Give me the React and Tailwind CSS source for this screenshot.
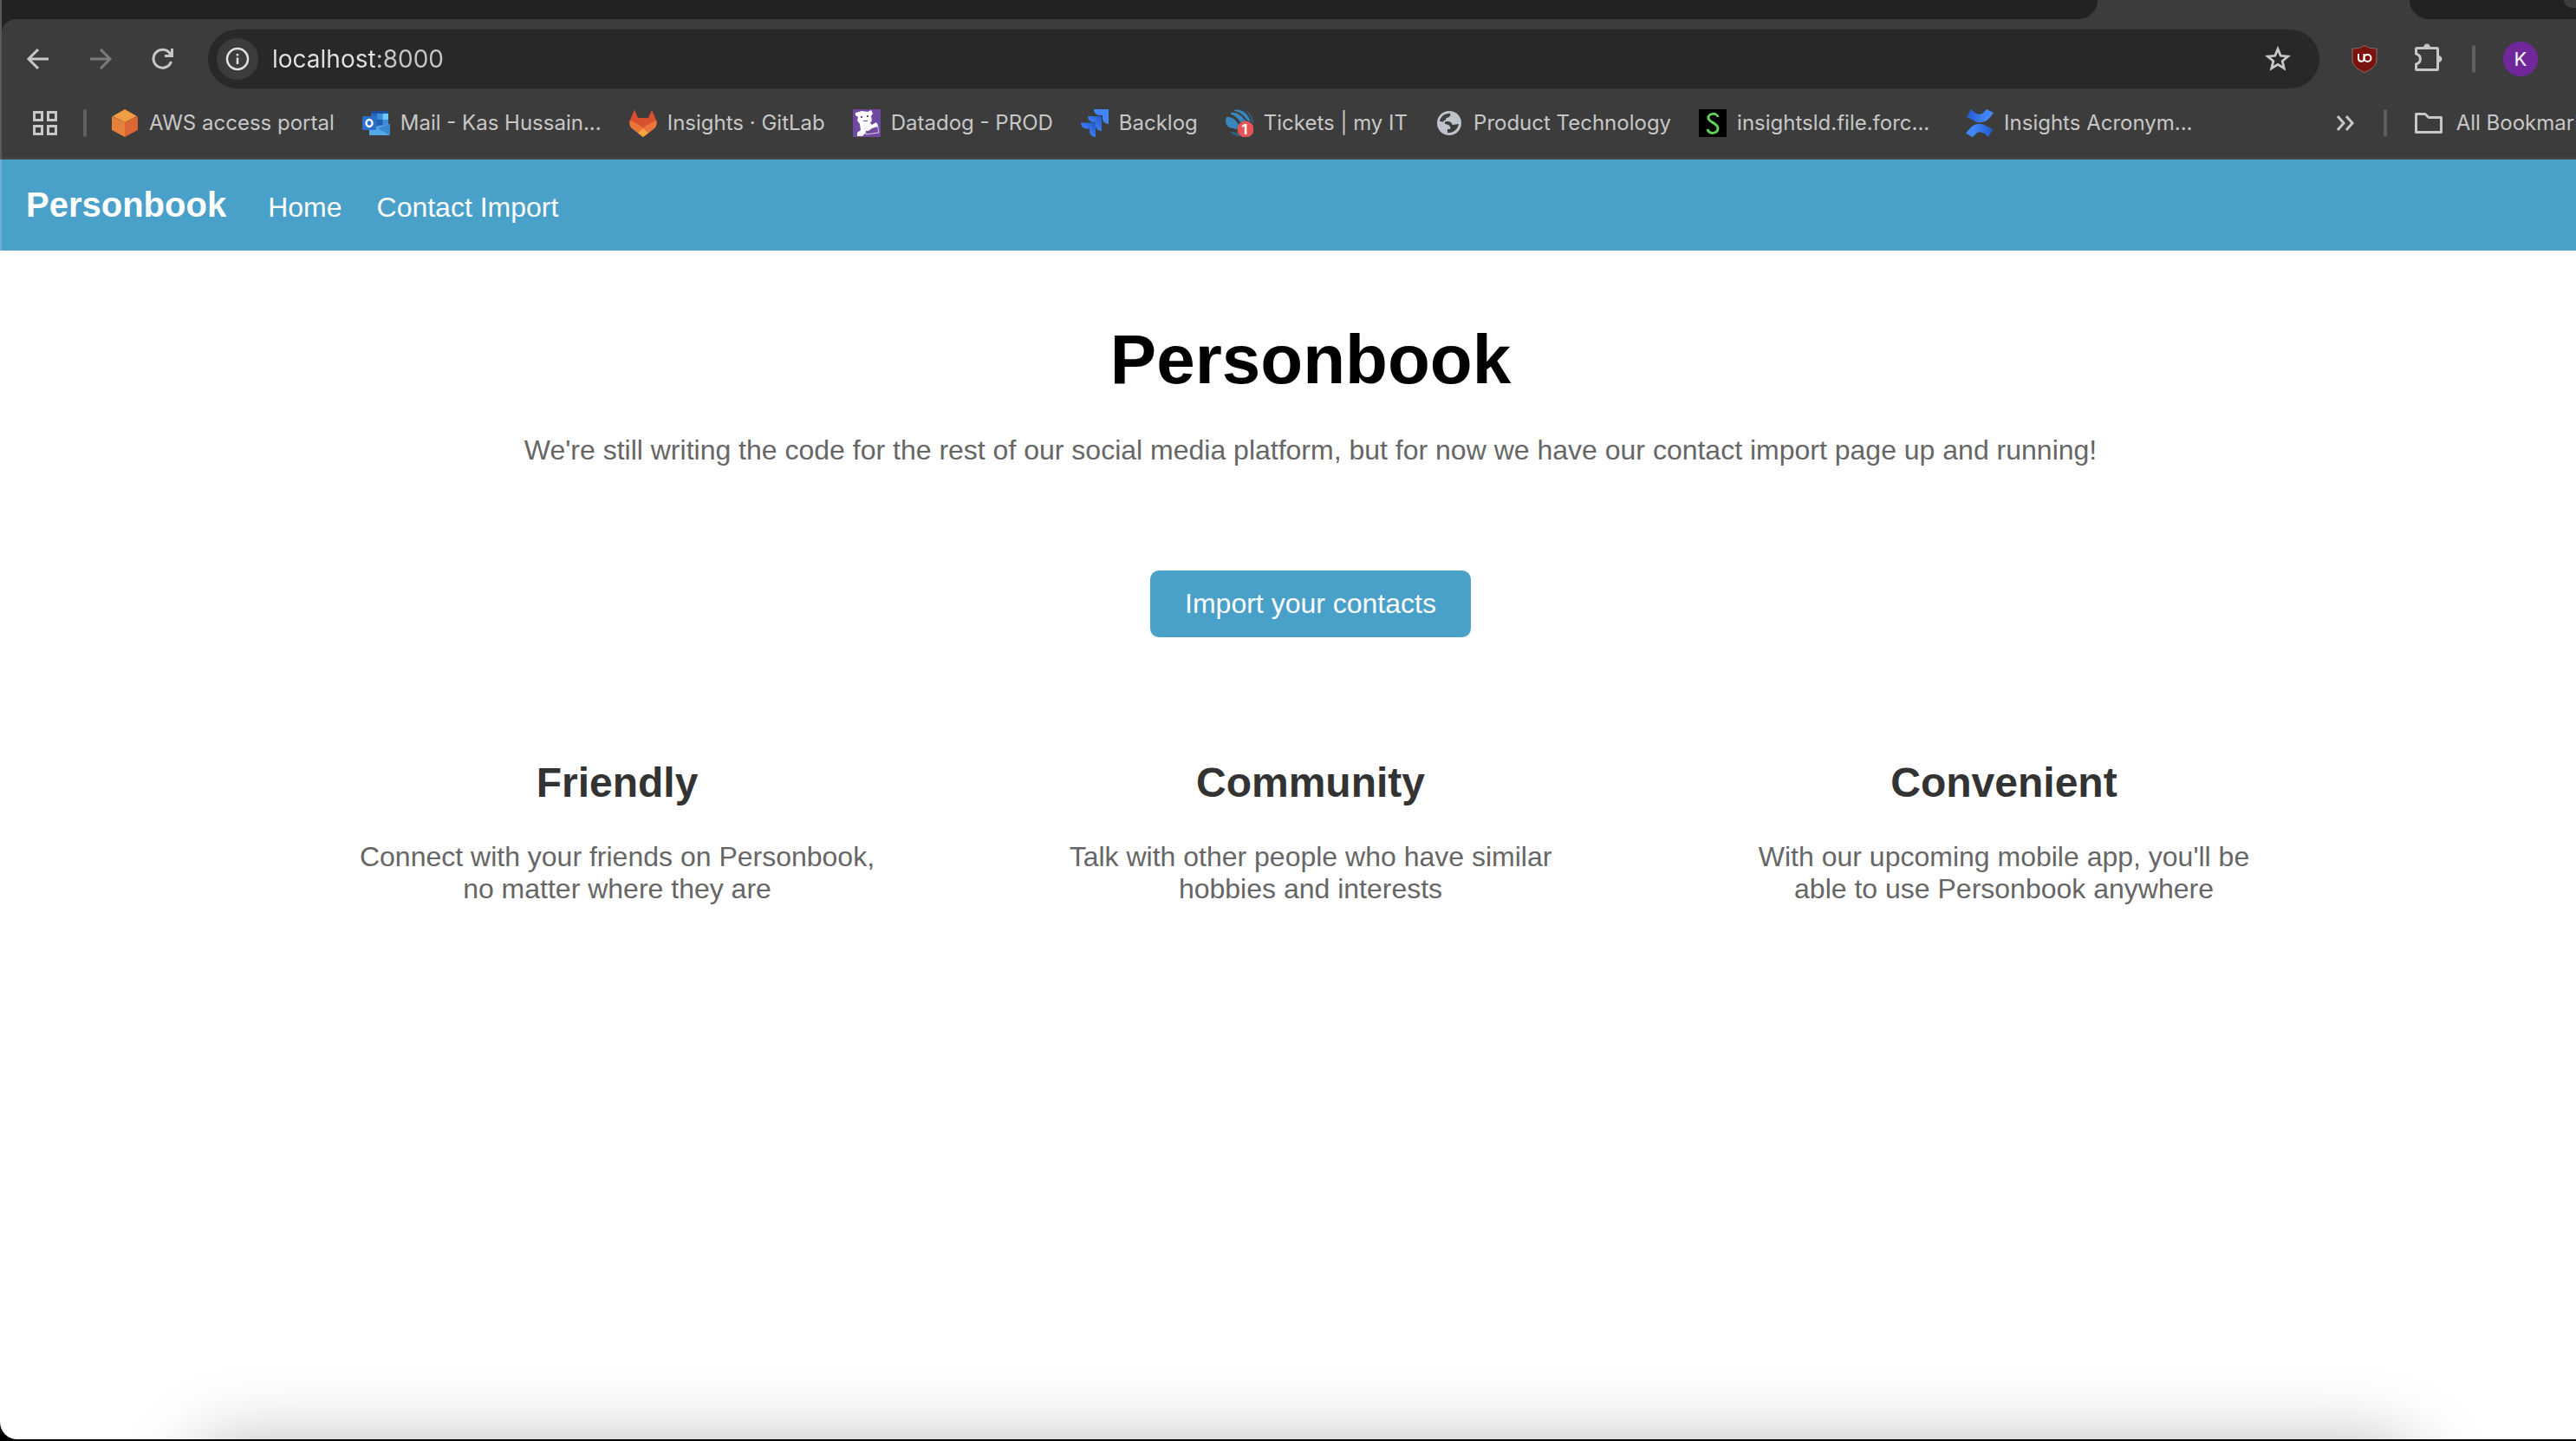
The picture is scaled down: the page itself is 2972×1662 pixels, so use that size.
import React from "react";

const AppsIcon = () => (
  <svg className="h-8 w-8" viewBox="0 0 32 32" fill="none" stroke="#c7c7c7" strokeWidth="3">
    <rect x="3.5" y="3.5" width="9" height="9" />
    <rect x="19.5" y="3.5" width="9" height="9" />
    <rect x="3.5" y="19.5" width="9" height="9" />
    <rect x="19.5" y="19.5" width="9" height="9" />
  </svg>
);

const AwsIcon = () => (
  <svg className="h-8 w-8 shrink-0" viewBox="0 0 32 32">
    <path d="M16 0 30 8 16 15 2 8Z" fill="#ef9c42" />
    <path d="M1 8 16 15V32L1 24Z" fill="#e5813a" />
    <path d="M31 8 16 15V32L31 24Z" fill="#dc6533" />
  </svg>
);

const OutlookIcon = () => (
  <svg className="h-8 w-8 shrink-0" viewBox="0 0 32 32">
    <path d="M10 2h20v18H10z" fill="#2a66b8" />
    <path d="M10 2h20v3H10z" fill="#1d4f98" />
    <path d="M17 5h6.500v7H17z" fill="#3a8edc" />
    <path d="M23.500 5H30v7h-6.500z" fill="#6fc9f8" />
    <path d="M17 12h6.500v6H17z" fill="#215fae" />
    <path d="M23.500 12H30v6h-6.500z" fill="#3a8edc" />
    <path d="M8 22l12-3 12-2v11a2 2 0 0 1-2 2H8z" fill="#53a8e6" />
    <path d="M18 22 32 30V17z" fill="#3c86cf" />
    <rect x="0" y="8" width="16" height="16" rx="1" fill="#2a6fc9" />
    <ellipse cx="8" cy="16" rx="3.500" ry="4" fill="none" stroke="#fff" strokeWidth="2.400" />
  </svg>
);

const GitlabIcon = () => (
  <svg className="h-8 w-8 shrink-0" viewBox="0 0 32 32">
    <path d="M6 0.500 10 10H22L26 0.500 31.500 14 16 24 0.500 14Z" fill="#d8502f" />
    <path d="M0.500 13C-0.500 17 1 21 4 23L16 32 28 23C31 21 32.500 17 31.500 13 27 14 22 17 16 21.500 10 17 5 14 0.500 13Z" fill="#ea743a" />
    <path d="M16 22 22 27.500 16 32 10 27.500Z" fill="#f0a53e" />
  </svg>
);

const DatadogIcon = () => (
  <svg className="h-8 w-8 shrink-0" viewBox="0 0 32 32">
    <rect width="32" height="32" fill="#704aa0" />
    <path d="M3 4 7 3 10 2 17 3 21 1 23 5 21 8 22 13 20 16 22 18 27 15 28 21 16 26 11 31 5 31 5 27 9 24 8 17 5 13 6 9 3 7Z" fill="#fff" />
    <path d="M14 21 28 17 30 27 15 29Z" fill="#704aa0" stroke="#d9cde8" strokeWidth="1" />
    <path d="M14 21 28 16 28.500 20 22 22 18 25 14.500 25Z" fill="#fff" />
    <path d="M9 8h2v2H9zM16 7h2v2h-2zM12 13h5v1h-5z" fill="#704aa0" />
  </svg>
);

const JiraIcon = () => (
  <svg className="h-8 w-8 shrink-0" viewBox="0 0 32 32">
    <defs>
      <linearGradient id="jiraShade" x1="1" y1="0" x2="0.300" y2="0.700">
        <stop offset="0" stopColor="#1f56c8" />
        <stop offset="1" stopColor="#4285f7" />
      </linearGradient>
    </defs>
    <path d="M15 0H32V17C28 17 25 14 25 10V7H22C18 7 15 4 15 0Z" fill="#4285f7" />
    <path d="M8 8H24V25C20 25 17 22 17 18V15H15C11 15 8 12 8 8Z" fill="url(#jiraShade)" />
    <path d="M0 15.500H17V32C13 32 10 29 10 25V22.500H7C3 22.500 0 19.500 0 15.500Z" fill="url(#jiraShade)" />
  </svg>
);

const TicketsIcon = () => (
  <svg className="h-8 w-8 shrink-0" viewBox="0 0 32 32">
    <path d="M1 9C6 8 12 12 15 18L13 23 4 21C0 18-1 13 1 9Z" fill="#3a86bb" />
    <path d="M6 4C13 3 20 8 24 15H17C15 11 11 7 6 6Z" fill="#3a86bb" />
    <path d="M10 1C18-1 25 4 29 14L25 13C21 7 17 3 10 2Z" fill="#3a86bb" />
    <path d="M22 1C28 3 32 9 32 17L30 14C29 8 26 4 22 1Z" fill="#33607f" />
    <path d="M5 26C9 30 14 32 19 31L15 27Z" fill="#33607f" />
    <circle cx="23" cy="23" r="9.500" fill="#e65555" />
    <text x="22" y="29" fill="#fff" fontSize="16" fontWeight="700" textAnchor="middle">1</text>
  </svg>
);

const GlobeIcon = () => (
  <svg className="h-8 w-8 shrink-0" viewBox="0 0 32 32">
    <circle cx="16" cy="16" r="14" fill="#bfc3ca" />
    <path d="M5 14C6 8.500 10.500 5 17 4.800C18 8 16 9.500 12.500 10C12.500 12 11.500 13 9.500 13V14.500Z" fill="#3c3c3c" />
    <path d="M11 14.500C14 13.500 19 14 19 17.500C21 18 23 17.500 27 17C26 23 21 27.500 14 27.200V23H17C18 20 16 17.500 11 17Z" fill="#3c3c3c" />
  </svg>
);

const SalesIcon = () => (
  <svg className="h-8 w-8 shrink-0" viewBox="0 0 32 32">
    <rect width="32" height="32" fill="#000" />
    <path d="M22 9C21 4 11 4 11 10C11 15 22 16 22 22C22 29 11 29 10 23" fill="none" stroke="#5fd35a" strokeWidth="3" />
  </svg>
);

const ConfluenceIcon = () => (
  <svg className="h-8 w-8 shrink-0" viewBox="0 0 32 32">
    <defs>
      <linearGradient id="confTop" x1="0" x2="1">
        <stop offset="0" stopColor="#2259cf" />
        <stop offset="0.700" stopColor="#4285f7" />
      </linearGradient>
      <linearGradient id="confBottom" x1="0" x2="1">
        <stop offset="0.300" stopColor="#4285f7" />
        <stop offset="1" stopColor="#2259cf" />
      </linearGradient>
    </defs>
    <path d="M6 0C11 5 14 7 19 5L24 0 32 4C25 15 17 18 9 13L1 9Z" fill="url(#confTop)" />
    <path d="M26 32C21 27 18 25 13 27L8 32 0 28C7 17 15 14 23 19L31 23Z" fill="url(#confBottom)" />
  </svg>
);

const bookmarks = [
  { label: "AWS access portal", Icon: AwsIcon },
  { label: "Mail - Kas Hussain...", Icon: OutlookIcon, capped: true },
  { label: "Insights · GitLab", Icon: GitlabIcon },
  { label: "Datadog - PROD", Icon: DatadogIcon },
  { label: "Backlog", Icon: JiraIcon },
  { label: "Tickets | my IT", Icon: TicketsIcon },
  { label: "Product Technology", Icon: GlobeIcon },
  { label: "insightsld.file.forc...", Icon: SalesIcon, capped: true },
  { label: "Insights Acronym...", Icon: ConfluenceIcon, capped: true },
];

const features = [
  { title: "Friendly", text: "Connect with your friends on Personbook, no matter where they are" },
  { title: "Community", text: "Talk with other people who have similar hobbies and interests" },
  { title: "Convenient", text: "With our upcoming mobile app, you'll be able to use Personbook anywhere" },
];

function TabStrip() {
  return (
    <div className="flex h-[22px] bg-[#3c3c3c]">
      <div className="flex-1 rounded-br-[22px] bg-[#202322]" />
      <div className="w-[360px]" />
      <div className="flex w-48 justify-end rounded-bl-[22px] bg-[#202322]">
        <div className="h-[9px] w-[14px] rounded-bl-xl bg-[#3c3c3c]" />
      </div>
    </div>
  );
}

function Toolbar() {
  return (
    <div className="flex h-[92px] items-center pl-6">
      <button aria-label="Back" className="flex h-9 w-9 items-center justify-center">
        <svg className="h-8 w-8" viewBox="0 0 32 32" fill="none" stroke="#c7c7c7" strokeWidth="3">
          <path d="M28 16H6M16 5 5 16 16 27" />
        </svg>
      </button>
      <button aria-label="Forward" disabled className="ml-9 flex h-9 w-9 items-center justify-center">
        <svg className="h-8 w-8" viewBox="0 0 32 32" fill="none" stroke="#7b7b7b" strokeWidth="3">
          <path d="M4 16H26M16 5 27 16 16 27" />
        </svg>
      </button>
      <button aria-label="Reload" className="ml-9 flex h-9 w-9 items-center justify-center">
        <svg className="h-8 w-8" viewBox="0 0 32 32" fill="none" stroke="#c7c7c7" strokeWidth="3">
          <path d="M25.500 19A10.500 10.500 0 1 1 24 9.500L26.500 12M26.500 4V12.500H18" />
        </svg>
      </button>
      <div className="ml-[34px] flex h-[68px] flex-1 items-center rounded-full bg-[#282828] pr-8 pl-[10px]">
        <button aria-label="Site information" className="flex h-12 w-12 items-center justify-center rounded-full bg-[#3c3c3c]">
          <svg className="h-8 w-8" viewBox="0 0 32 32" fill="none" stroke="#e3e3e3" strokeWidth="2.500">
            <circle cx="16" cy="16" r="12" />
            <path d="M16 14.500V22M16 10V12.500" />
          </svg>
        </button>
        <input
          type="text"
          aria-label="Address and search bar"
          defaultValue="localhost:8000"
          className="ml-4 min-w-0 flex-1 bg-[linear-gradient(to_right,#e3e3e3_121px,#c7c7c7_121px)] bg-clip-text text-[28px] text-transparent outline-none"
        />
        <button aria-label="Bookmark this tab">
          <svg className="h-8 w-8" viewBox="0 0 32 32" fill="none" stroke="#c7c7c7" strokeWidth="2.800">
            <path d="M16 4.500 19.200 12.300 27.600 13 21.200 18.500 23.200 26.700 16 22.300 8.800 26.700 10.800 18.500 4.400 13 12.800 12.300Z" />
          </svg>
        </button>
      </div>
      <button aria-label="uBlock Origin" className="ml-9">
        <svg className="h-8 w-8" viewBox="0 0 32 32">
          <path d="M16 0.500C20 3.500 25 4 30 4V16C30 24 24 28 16 31.500 8 28 2 24 2 16V4C7 4 12 3.500 16 0.500Z" fill="#7a120d" stroke="#8f6a68" />
          <path d="M9 10V16A3.500 3.500 0 0 0 15.500 17V10" fill="none" stroke="#fff" strokeWidth="2" />
          <circle cx="19.500" cy="15" r="4" fill="none" stroke="#fff" strokeWidth="2" />
        </svg>
      </button>
      <button aria-label="Extensions" className="ml-10">
        <svg className="h-9 w-9" viewBox="0 0 36 36">
          <path d="M3.500 12V6.500A1 1 0 0 1 4.500 5.500H27.500A1 1 0 0 1 28.500 6.500V29.500A1 1 0 0 1 27.500 30.500H4.500A1 1 0 0 1 3.500 29.500V24C10 22 10 14 3.500 12Z" fill="none" stroke="#c7c7c7" strokeWidth="3" strokeLinejoin="round" />
          <path d="M12 5A4 4.500 0 0 1 20 5ZM29 14A4.500 4 0 0 1 29 22Z" fill="#c7c7c7" />
        </svg>
      </button>
      <div className="mx-8 h-8 w-1 rounded-full bg-[#5f5f5f]" />
      <button aria-label="Profile" className="mr-11 flex h-10 w-10 items-center justify-center rounded-full bg-[#71279c] text-[22px] text-white">
        K
      </button>
    </div>
  );
}

function BookmarkBar() {
  return (
    <div className="flex h-[70px] items-center overflow-hidden border-b-2 border-[#474747] pb-3 pl-[34px] text-2xl whitespace-nowrap text-[#c7c7c7]">
      <button aria-label="Apps"><AppsIcon /></button>
      <div className="mx-7 h-8 w-1 shrink-0 rounded-full bg-[#5f5f5f]" />
      <nav aria-label="Bookmarks" className="flex flex-1 gap-8">
        {bookmarks.map(({ label, Icon, capped }) => (
          <a key={label} href="#" className="flex items-center gap-3">
            <Icon />
            <span className={capped ? "w-[232px]" : ""}>{label}</span>
          </a>
        ))}
      </nav>
      <button aria-label="More bookmarks">
        <svg className="h-8 w-8" viewBox="0 0 32 32" fill="none" stroke="#c7c7c7" strokeWidth="3">
          <path d="M7 8 14 16 7 24M17 8 24 16 17 24" />
        </svg>
      </button>
      <div className="mr-8 ml-7 h-8 w-1 shrink-0 rounded-full bg-[#5f5f5f]" />
      <button className="-mr-6 flex items-center gap-4">
        <svg className="h-8 w-8" viewBox="0 0 32 32" fill="none" stroke="#c7c7c7" strokeWidth="3" strokeLinejoin="round">
          <path d="M1.500 5.500H12L16 9.500H30.500V26.500H1.500Z" />
        </svg>
        All Bookmarks
      </button>
    </div>
  );
}

export default function App() {
  return (
    <div className="h-screen overflow-hidden bg-black pb-[2px] font-['Inter',sans-serif]">
      <div className="relative flex h-full flex-col overflow-hidden rounded-bl-[20px] bg-white">
        <header className="border-l-2 border-[#5a5a5a] bg-[#202322]">
          <TabStrip />
          <div className="rounded-tl-2xl bg-[#3c3c3c]">
            <Toolbar />
            <BookmarkBar />
          </div>
        </header>
        <div className="-mr-[52px] flex-1 font-['Liberation_Sans',Arial,sans-serif] text-[32px] leading-[37px]">
          <nav className="flex items-baseline border-l-2 border-[#6bb0d2] bg-[#49a0c9] pt-[29px] pb-[30px] pl-7 text-white">
            <a href="#" className="text-[40px] leading-[46px] font-bold">Personbook</a>
            <a href="#" className="ml-12">Home</a>
            <a href="#" className="ml-10">Contact Import</a>
          </nav>
          <main className="flex flex-col items-center pt-20 text-center text-[#666]">
            <h1 className="text-[80px] leading-[92px] font-bold text-black">Personbook</h1>
            <p className="mt-10">
              We're still writing the code for the rest of our social media platform, but for now we have our contact import page up and running!
            </p>
            <button className="mt-[120px] rounded-[10px] bg-[#49a0c9] px-10 py-5 text-white">Import your contacts</button>
            <section className="mt-[140px] grid w-full max-w-[2400px] grid-cols-3">
              {features.map(({ title, text }) => (
                <article key={title} className="flex flex-col items-center">
                  <h2 className="text-5xl leading-[55px] font-bold text-[#333]">{title}</h2>
                  <p className="mt-10 max-w-[600px]">{text}</p>
                </article>
              ))}
            </section>
          </main>
        </div>
        <div className="pointer-events-none absolute top-full right-[175px] left-[215px] h-40 rounded-[60px] shadow-[0_0_80px_rgba(0,0,0,0.25)]" />
      </div>
    </div>
  );
}
